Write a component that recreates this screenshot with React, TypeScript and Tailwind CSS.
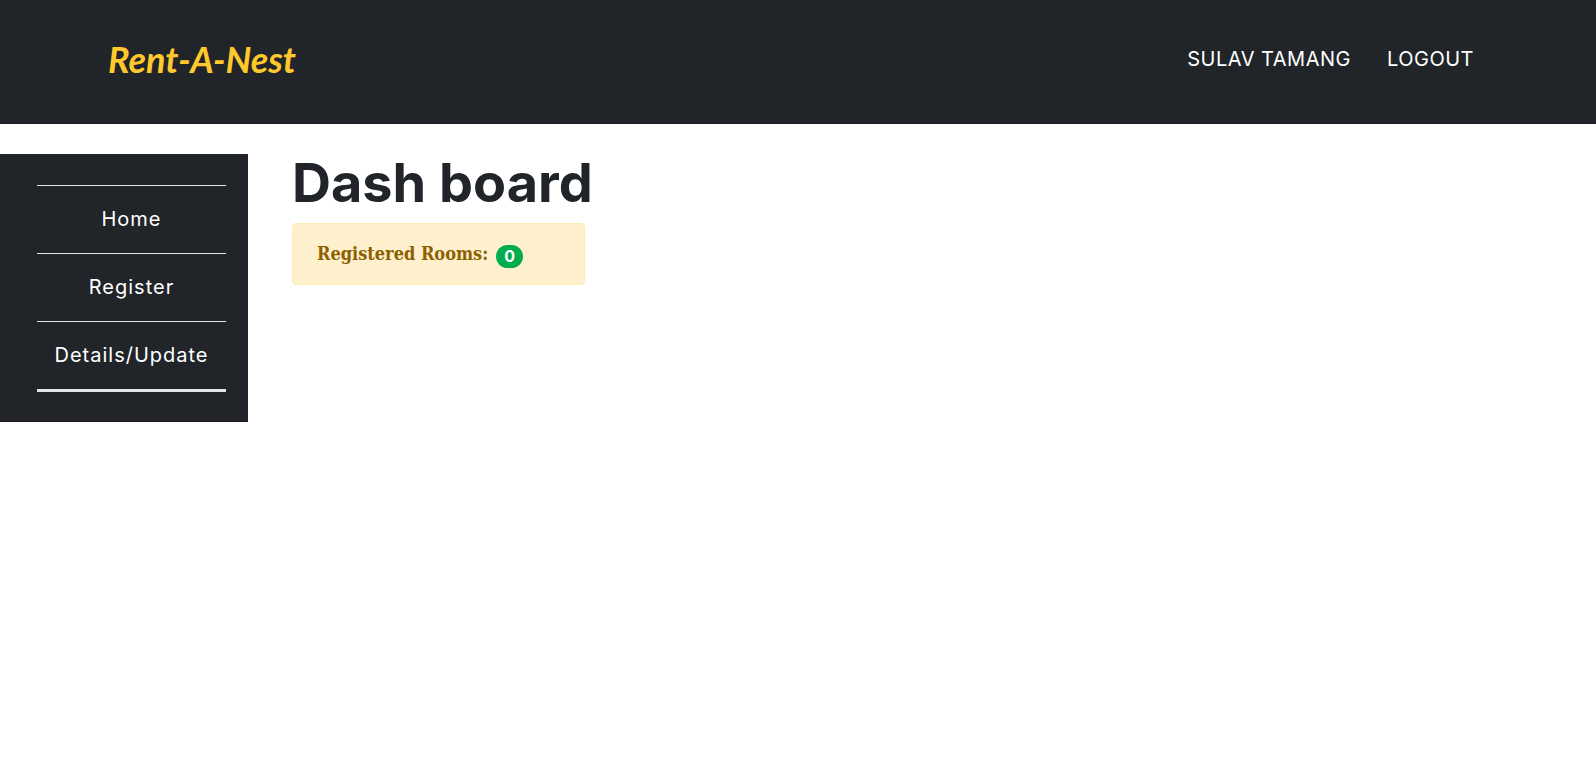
const links = ['Home', 'Register', 'Details/Update'];

export default function App() {
  return (
    <div className="min-h-screen bg-white font-['Inter',sans-serif] text-[#212529]">
      <header className="flex h-31 items-center justify-between border-b border-[#211c24] bg-[#212529] pr-[122px] pb-1.5 pl-[108px]">
        <a href="#" className="font-['Lato',sans-serif] text-4xl font-bold text-[#ffc82c] italic">
          Rent-A-Nest
        </a>
        <nav className="flex gap-9 text-xl tracking-wide text-white">
          <a href="#">SULAV TAMANG</a>
          <a href="#">LOGOUT</a>
        </nav>
      </header>
      <div className="flex items-start pt-[30px]">
        <aside className="w-62 shrink-0 border-b border-[#211c24] bg-[#212529] pt-[31px] pr-[22px] pb-[30px] pl-[37px]">
          <ul className="-mb-px border-b-3 border-[#e4e4e6]">
            {links.map((label) => (
              <li key={label} className="border-t border-[#e4e4e6]">
                <a href="#" className="block pt-[19px] pb-5 text-center text-xl leading-7 tracking-wider text-white">
                  {label}
                </a>
              </li>
            ))}
          </ul>
        </aside>
        <main className="pl-11">
          <h1 className="mb-3 text-[54px] leading-[57px] font-bold">Dash board</h1>
          <section className="flex h-[62px] w-[293px] items-center gap-2 rounded border border-[#ffecb5] bg-[#fff0cd] px-6">
            <h2 className="font-['DejaVu_Serif_Condensed','DejaVu_Serif',serif] text-lg font-bold whitespace-nowrap text-[#8c6000]">
              Registered Rooms:
            </h2>
            <span className="mt-1 rounded-full bg-[#00ac4e] px-2 text-base leading-[23px] font-bold text-white">0</span>
          </section>
        </main>
      </div>
    </div>
  );
}
